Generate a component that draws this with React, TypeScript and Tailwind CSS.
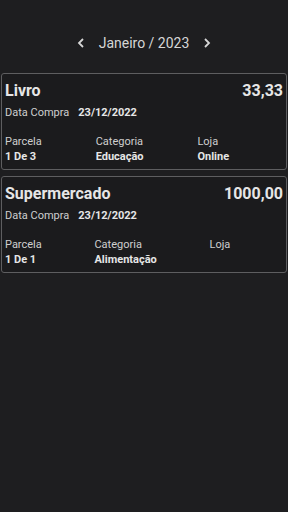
export default function App() {
  const items = [
    {
      nome: "Livro",
      valor: "33,33",
      data: "23/12/2022",
      parcela: "1 De 3",
      categoria: "Educação",
      loja: "Online",
    },
    {
      nome: "Supermercado",
      valor: "1000,00",
      data: "23/12/2022",
      parcela: "1 De 1",
      categoria: "Alimentação",
      loja: "",
    },
  ]

  return (
    <div className="w-[288px] h-[512px] bg-[#1e1e20] font-['Roboto',sans-serif] text-[#e6e6e6] overflow-hidden">
      {/* Month selector */}
      <div className="flex items-center justify-center h-[86px] gap-[12px] text-[#d6d6d6]">
        <svg width="12" height="12" viewBox="0 0 12 12">
          <path d="M8 2 L4 6 L8 10" fill="none" stroke="currentColor" strokeWidth="1.8" />
        </svg>
        <span className="text-[14px]">Janeiro / 2023</span>
        <svg width="12" height="12" viewBox="0 0 12 12">
          <path d="M4 2 L8 6 L4 10" fill="none" stroke="currentColor" strokeWidth="1.8" />
        </svg>
      </div>

      {/* Lista */}
      <div className="flex flex-col gap-[6px] px-[1px] -mt-[13px]">
        {items.map((it) => (
          <div
            key={it.nome}
            className="border border-[#5e5e60] rounded-[3px] bg-[#1b1b1d] px-[3px] pt-[6px] h-[97px]"
          >
            <div className="flex justify-between items-center">
              <span className="text-[16px] font-bold leading-[22px]">{it.nome}</span>
              <span className="text-[16px] font-bold leading-[22px]">{it.valor}</span>
            </div>
            <div className="flex items-center text-[11px] mt-[3px] leading-[16px]">
              <span className="text-[#cfcfcf]">Data Compra</span>
              <span className="font-bold ml-[9px]">{it.data}</span>
            </div>
            <div className="flex mt-[13px] text-[11px] leading-[15px]">
              <div className="flex-auto">
                <div className="text-[#cfcfcf]">Parcela</div>
                <div className="font-bold">{it.parcela}</div>
              </div>
              <div className="flex-auto">
                <div className="text-[#cfcfcf]">Categoria</div>
                <div className="font-bold">{it.categoria}</div>
              </div>
              <div className="flex-auto">
                <div className="text-[#cfcfcf]">Loja</div>
                <div className="font-bold">{it.loja}</div>
              </div>
            </div>
          </div>
        ))}
      </div>
    </div>
  )
}
